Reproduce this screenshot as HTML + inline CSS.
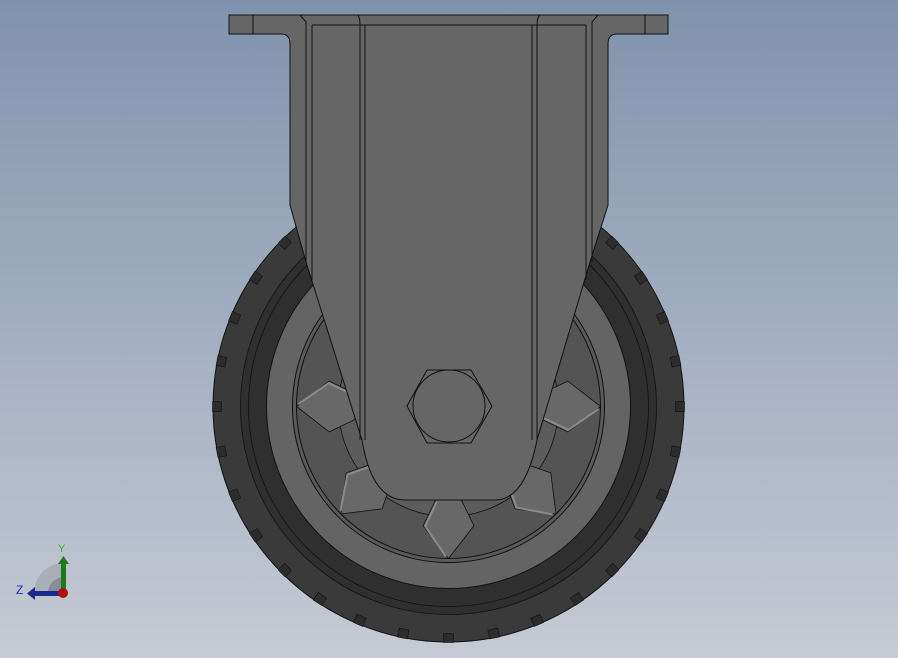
<!DOCTYPE html>
<html><head><style>
html,body{margin:0;padding:0;}
body{width:898px;height:658px;overflow:hidden;background:linear-gradient(#8093ad,#c6cad4);}
svg{display:block}
</style></head><body>
<svg width="898" height="658" viewBox="0 0 898 658" xmlns="http://www.w3.org/2000/svg">
<g stroke="#111" stroke-width="1">
<circle cx="448.5" cy="406.5" r="235.5" fill="#3a3a3a"/>
<circle cx="448.5" cy="406.5" r="208" fill="#2f2f2f" stroke-width="0.8"/>
<circle cx="448.5" cy="406.5" r="200" fill="none" stroke-width="0.8"/>
<circle cx="448.5" cy="406.5" r="182" fill="#646464"/>
<circle cx="448.5" cy="406.5" r="156" fill="#5a5a5a"/>
<circle cx="448.5" cy="406.5" r="152" fill="#545454"/>
<circle cx="448.5" cy="406.5" r="110" fill="#5c5c5c" stroke-width="0.8"/>
</g>
<g id="treads" fill="#2c2c2c" stroke="#111" stroke-width="0.6"></g>
<g id="spokes" fill="#686868" stroke="#111" stroke-width="0.8"></g>
<script>
(function(){
var cx=448.5,cy=406.5,ns="http://www.w3.org/2000/svg";
var t=document.getElementById('treads');
for(var a=0;a<360;a+=11.25){
 var r=document.createElementNS(ns,'rect');
 r.setAttribute('x',cx+227);r.setAttribute('y',cy-5);r.setAttribute('width',9);r.setAttribute('height',10);
 r.setAttribute('transform','rotate('+a+' '+cx+' '+cy+')');t.appendChild(r);
}
var s=document.getElementById('spokes');
function p(r,ang){ang=ang*Math.PI/180;return (cx+r*Math.cos(ang)).toFixed(1)+','+(cy+r*Math.sin(ang)).toFixed(1);}
for(var k=0;k<8;k++){
 var a=45*k;
 var pg=document.createElementNS(ns,'polygon');
 pg.setAttribute('points',[p(152,a),p(122,a-12),p(95,a-8),p(90,a),p(95,a+8),p(122,a+12)].join(' '));
 s.appendChild(pg);
 var l=document.createElementNS(ns,'polyline');
 l.setAttribute('points',[p(150,a+1),p(122,a+11),p(96,a+7)].join(' '));
 l.setAttribute('fill','none');l.setAttribute('stroke','#8a8a8a');l.setAttribute('stroke-width','2');
 s.appendChild(l);
}
})();
</script>
<g stroke="#111" stroke-width="1">
<path d="M229,15 H668 V34 H617 Q608,34 608,44 V205 L590,262 L537,440 Q525,500 495,500 H405 Q372,500 362,440 L306,262 L290,205 V44 Q290,34 281,34 H229 Z" fill="#666"/>
<line x1="253" y1="15" x2="253" y2="34"/>
<line x1="645" y1="15" x2="645" y2="34"/>
<line x1="312" y1="25" x2="586" y2="25"/>
<path d="M300,15 L306,22 V262" fill="none"/>
<path d="M312,25 V280" fill="none"/>
<path d="M598,15 L592,22 V262" fill="none"/>
<path d="M586,25 V280" fill="none"/>
<path d="M358,15 Q360,18 360,25 V440" fill="none"/>
<path d="M365,25 V440" fill="none"/>
<path d="M540,15 Q537,18 537,25 V440" fill="none"/>
<path d="M532,25 V440" fill="none"/>
<polygon points="407,406 427,370 471,370 492,406 471,443 427,443" fill="#666"/>
<circle cx="449" cy="406" r="36" fill="#666"/>
</g>
<g>
<path d="M34,593 A30,30 0 0 1 64,563 V593 Z" fill="#a9aeb8"/>
<path d="M48,593 A16,16 0 0 1 64,577 V593 Z" fill="#888d96"/>
<rect x="61" y="562" width="5" height="30" fill="#1f7a1f"/>
<polygon points="58,564 63.5,556 69,564" fill="#1f7a1f"/>
<rect x="34" y="591" width="28" height="5" fill="#1a2a90"/>
<polygon points="35,587 27,593.5 35,600" fill="#1a2a90"/>
<circle cx="63" cy="593" r="5" fill="#b01010"/>
<text x="58" y="552" font-family="Liberation Sans, sans-serif" font-size="11" fill="#2db02d">Y</text>
<text x="16" y="594" font-family="Liberation Sans, sans-serif" font-size="12" fill="#2030b0">Z</text>
</g>
</svg>
</body></html>
